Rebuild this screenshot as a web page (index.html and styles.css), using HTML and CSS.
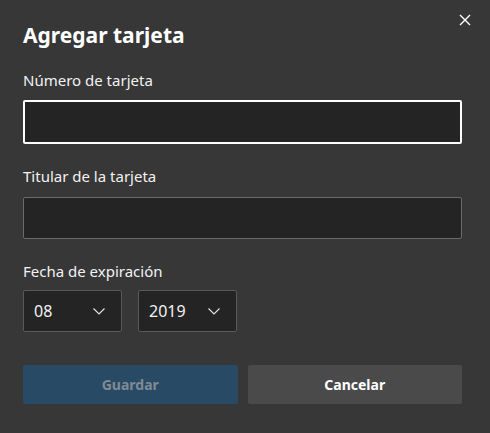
FILE: index.html
```html
<!DOCTYPE html>
<html lang="es">
<head>
<meta charset="utf-8">
<link rel="stylesheet" href="styles.css">
</head>
<body>
<div class="dialog">
  <button class="close" aria-label="Cerrar">
    <svg width="12" height="12" viewBox="0 0 12 12"><path d="M1 1 L11 11 M11 1 L1 11" stroke="#ffffff" stroke-width="1.4" fill="none"/></svg>
  </button>
  <h1 class="title">Agregar tarjeta</h1>
  <label class="label first">Número de tarjeta</label>
  <div class="input focused"></div>
  <label class="label">Titular de la tarjeta</label>
  <div class="input"></div>
  <label class="label">Fecha de expiración</label>
  <div class="selects">
    <div class="select"><span>08</span>
      <svg width="12" height="7" viewBox="0 0 12 7"><path d="M0.5 0.5 L6 6 L11.5 0.5" stroke="#e6e6e6" stroke-width="1.1" fill="none"/></svg>
    </div>
    <div class="select"><span>2019</span>
      <svg width="12" height="7" viewBox="0 0 12 7"><path d="M0.5 0.5 L6 6 L11.5 0.5" stroke="#e6e6e6" stroke-width="1.1" fill="none"/></svg>
    </div>
  </div>
  <div class="buttons">
    <button class="btn primary">Guardar</button>
    <button class="btn secondary">Cancelar</button>
  </div>
</div>
</body>
</html>
```

FILE: styles.css
```css
html, body {
  margin: 0;
  padding: 0;
  background: #373737;
}
body {
  width: 490px;
  height: 433px;
  overflow: hidden;
  font-family: "Noto Sans", "Open Sans", sans-serif;
  color: #ffffff;
}
.dialog {
  position: relative;
  padding: 21px 28px 0 23px;
  display: flex;
  flex-direction: column;
}
.close {
  position: absolute;
  top: 14px;
  left: 459px;
  width: 12px;
  height: 12px;
  padding: 0;
  border: 0;
  background: none;
  display: flex;
}
.title {
  margin: 0;
  font-size: 21px;
  font-weight: 700;
  line-height: 28px;
  height: 28px;
}
.label {
  display: block;
  font-size: 15px;
  line-height: 20px;
  margin-top: 22px;
  color: #f2f2f2;
}
.label.first { margin-top: 21px; }
.input {
  margin-top: 11px;
  height: 40px;
  width: 437px;
  background: #242424;
  border: 1px solid #6b6b6b;
  border-radius: 2px;
}
.input.focused {
  margin-top: 10px;
  height: 40px;
  width: 435px;
  border: 2px solid #ffffff;
}
.selects {
  margin-top: 9px;
  display: flex;
  gap: 16px;
}
.select {
  box-sizing: border-box;
  width: 99px;
  height: 42px;
  background: #242424;
  border: 1px solid #595959;
  border-radius: 2px;
  display: flex;
  align-items: center;
  justify-content: space-between;
  padding: 0 16px 0 10px;
  font-size: 16px;
  color: #f2f2f2;
}
.buttons {
  margin-top: 33px;
  display: flex;
  gap: 10px;
}
.btn {
  width: 215px;
  height: 39px;
  border: 0;
  border-radius: 2px;
  font-family: "Noto Sans", "Open Sans", sans-serif;
  font-size: 14px;
  font-weight: 700;
  padding: 0;
}
.primary {
  background: #284a65;
  color: #7f8c96;
}
.secondary {
  background: #4a4a4a;
  color: #ffffff;
}
```
